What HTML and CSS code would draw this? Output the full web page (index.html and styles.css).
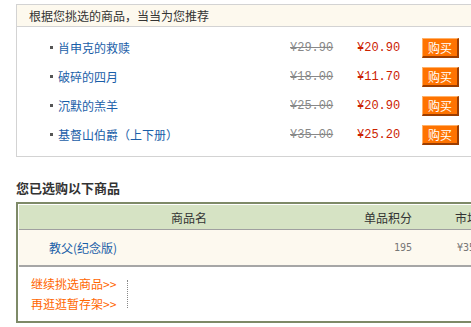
FILE: index.html
```html
<!DOCTYPE html>
<html>
<head>
  <meta charset="UTF-8">
  <title>购物车推荐</title>
  <link rel="stylesheet" href="styles.css">
</head>
<body>
  <div class="rec">
    <div class="rec-head">根据您挑选的商品，当当为您推荐</div>
    <ul class="rec-list">
      <li class="rec-row">
        <a class="rec-name" href="#">肖申克的救赎</a>
        <span class="old">¥29.90</span>
        <span class="new">¥20.90</span>
        <span class="buy">购买</span>
      </li>
      <li class="rec-row">
        <a class="rec-name" href="#">破碎的四月</a>
        <span class="old">¥18.00</span>
        <span class="new">¥11.70</span>
        <span class="buy">购买</span>
      </li>
      <li class="rec-row">
        <a class="rec-name" href="#">沉默的羔羊</a>
        <span class="old">¥25.00</span>
        <span class="new">¥20.90</span>
        <span class="buy">购买</span>
      </li>
      <li class="rec-row">
        <a class="rec-name" href="#">基督山伯爵（上下册）</a>
        <span class="old">¥35.00</span>
        <span class="new">¥25.20</span>
        <span class="buy">购买</span>
      </li>
    </ul>
  </div>

  <h3 class="cart-title">您已选购以下商品</h3>
  <div class="cart">
    <div class="cart-head">
      <span class="c-name">商品名</span>
      <span class="c-score">单品积分</span>
      <span class="c-market">市场价</span>
    </div>
    <div class="cart-row">
      <a class="c-name item" href="#">教父(纪念版)</a>
      <span class="c-score num">195</span>
      <span class="c-market num">¥35.00</span>
    </div>
    <div class="cart-foot">
      <div class="links">
        <a href="#">继续挑选商品&gt;&gt;</a>
        <a href="#">再逛逛暂存架&gt;&gt;</a>
      </div>
      <div class="sep"></div>
    </div>
  </div>
</body>
</html>
```

FILE: styles.css
```css
body {
  margin: 0;
  padding: 0;
  font-family: "Noto Sans CJK SC", "Liberation Sans", sans-serif;
  font-size: 12px;
  color: #333;
  overflow: hidden;
}
a {
  text-decoration: none;
}

.rec {
  margin: 4px 0 0 16px;
  width: 480px;
  border: 1px solid #d3d3d3;
}
.rec-head {
  height: 21px;
  line-height: 21px;
  padding-left: 12px;
  background-color: #fdf9ee;
  border-bottom: 1px solid #d3d3d3;
  color: #333;
}
.rec-list {
  margin: 0;
  padding: 6px 0 7px 33px;
  list-style: none;
}
.rec-row {
  display: grid;
  grid-template-columns: 240px 67px 65px 37px;
  align-items: center;
  height: 29px;
}
.rec-name {
  color: #1a5ea8;
  display: flex;
  align-items: center;
}
.rec-name::before {
  content: "";
  width: 3px;
  height: 3px;
  background-color: #555;
  margin-right: 5px;
}
.old, .new {
  font-family: "Liberation Mono", monospace;
  font-size: 12px;
}
.old {
  color: #888;
  text-decoration: line-through;
}
.new {
  color: #cc2200;
}
.buy {
  box-sizing: border-box;
  width: 37px;
  height: 20px;
  line-height: 17px;
  text-align: center;
  color: #fff;
  background-color: #ff7300;
  border-top: 1px solid #ffb168;
  border-left: 1px solid #ffb168;
  border-right: 2px solid #9c3d00;
  border-bottom: 2px solid #9c3d00;
}

.cart-title {
  margin: 22px 0 0 16px;
  font-size: 13px;
  font-weight: bold;
  color: #333;
  line-height: 18px;
}
.cart {
  margin: 5px 0 0 16px;
  width: 480px;
  border: 2px solid #7e8a68;
  padding: 1px;
}
.cart-head, .cart-row {
  display: grid;
  grid-template-columns: 340px 56px 100px;
  align-items: center;
  white-space: nowrap;
}
.cart-head {
  height: 24px;
  background-color: #d6e3c4;
  border-bottom: 1px solid #a0a0a0;
}
.cart-head .c-name {
  text-align: center;
}
.cart-head .c-score {
  text-align: right;
  padding-right: 3px;
}
.cart-head .c-market {
  padding-left: 40px;
}
.cart-row {
  height: 35px;
  background-color: #fdf9ef;
  border-bottom: 2px solid #a6a6a6;
}
.item {
  color: #1a5ea8;
  padding-left: 30px;
}
.num {
  font-family: "DejaVu Sans Mono", monospace;
  font-size: 10px;
  color: #777;
}
.cart-row .c-score {
  text-align: right;
  padding-right: 3px;
}
.cart-row .c-market {
  padding-left: 42px;
}
.cart-foot {
  display: flex;
  align-items: center;
  height: 53px;
  padding-left: 12px;
}
.links {
  display: flex;
  flex-direction: column;
  gap: 2px;
  width: 96px;
}
.links a {
  color: #ff6600;
  line-height: 18px;
}
.sep {
  height: 28px;
  border-left: 1px dotted #888;
}
```
